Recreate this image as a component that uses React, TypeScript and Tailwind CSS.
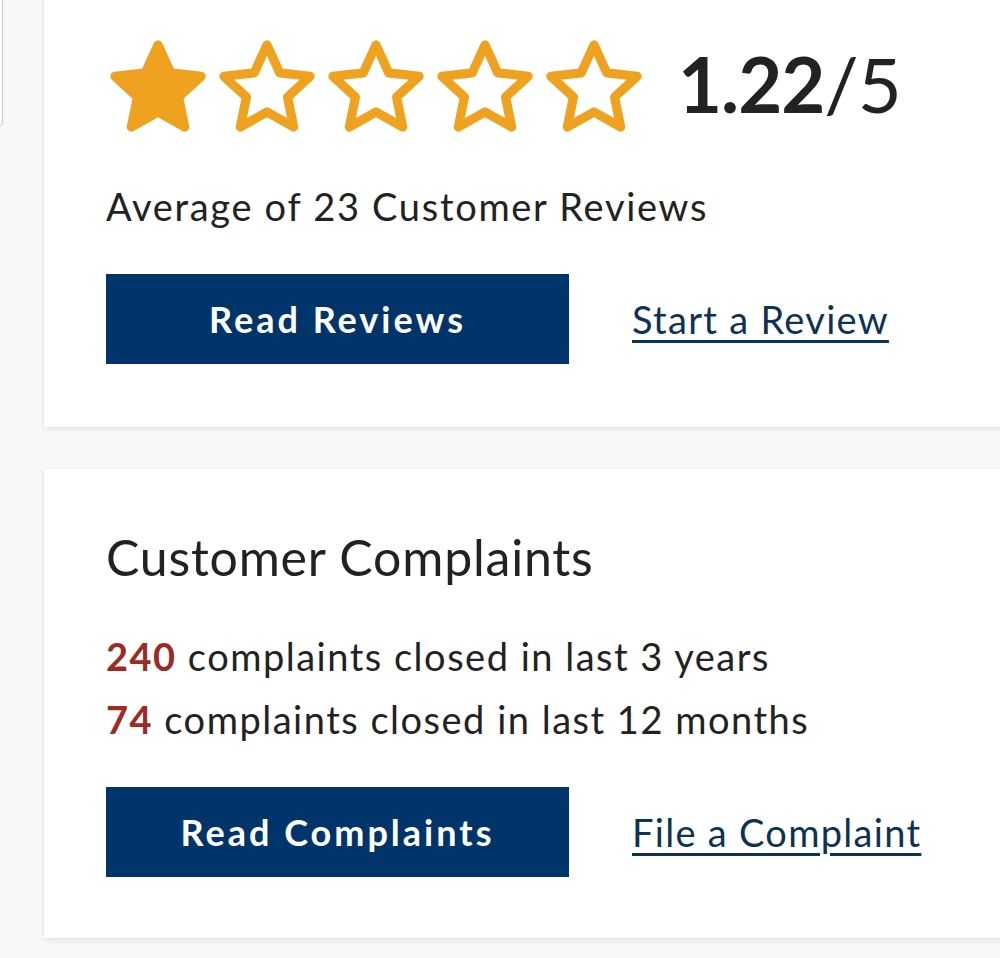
import React from 'react';

const starPoints =
  '50,12 61.8,37.8 89.9,41 69,60.2 74.7,88 50,74 25.3,88 31,60.2 10.1,41 38.2,37.8';

function Star({ filled }: { filled: boolean }) {
  return (
    <svg viewBox="0 0 100 100" className="w-[108px] h-[108px] shrink-0">
      <polygon
        points={starPoints}
        fill={filled ? '#efa21f' : 'none'}
        stroke="#efa21f"
        strokeWidth={8.5}
        strokeLinejoin="round"
      />
    </svg>
  );
}

export default function App() {
  const rating = 1;
  return (
    <div className="relative h-[958px] overflow-hidden bg-[#f8f8f8] font-['Lato',sans-serif] text-[#222]">
      {/* sliver of an overlay at the left edge */}
      <div className="absolute left-[-20px] top-[-10px] w-[23px] h-[138px] rounded-br-[6px] border border-[#c8c8c8] bg-white" />

      <div className="pl-[44px]">
        {/* Reviews card */}
        <section className="-mt-[20px] w-[1000px] bg-white pl-[56px] pt-[52px] pb-[63px] shadow-[0_3px_5px_rgba(0,0,0,0.07),-1px_0_3px_rgba(0,0,0,0.04)]">
          <div className="ml-[4px] flex items-center">
            <div className="flex gap-[1px]">
              {[0, 1, 2, 3, 4].map((i) => (
                <Star key={i} filled={i < rating} />
              ))}
            </div>
            <p className="ml-[30px] -mt-[4px] text-[76px] leading-none tracking-[-1px] text-[#222]">
              <span className="font-bold">1.22</span>/5
            </p>
          </div>

          <p className="ml-[6px] mt-[42px] text-[38px] leading-[48px] tracking-[1.7px]">Average of 23 Customer Reviews</p>

          <div className="ml-[6px] mt-[44px] flex items-center">
            <button className="w-[463px] h-[90px] bg-[#00346a] text-white text-[36px] tracking-[3px] font-bold flex items-center justify-center">
              Read Reviews
            </button>
            <a href="#" className="ml-[63px] text-[38px] tracking-[1.3px] text-[#0c3256] underline decoration-[3px] underline-offset-[6px]">
              Start a Review
            </a>
          </div>
        </section>

        {/* Complaints card */}
        <section className="mt-[42px] w-[1000px] bg-white pl-[62px] pt-[60px] pb-[61px] shadow-[0_3px_5px_rgba(0,0,0,0.07),-1px_0_3px_rgba(0,0,0,0.04)]">
          <h2 className="text-[50px] leading-[56px] tracking-[0.8px] font-normal">Customer Complaints</h2>

          <div className="mt-[40px] text-[38px] leading-[63px] tracking-[1.5px]">
            <p>
              <span className="font-bold text-[#9c2b23]">240</span> complaints closed in last 3 years
            </p>
            <p>
              <span className="font-bold text-[#9c2b23]">74</span> complaints closed in last 12 months
            </p>
          </div>

          <div className="mt-[36px] flex items-center">
            <button className="w-[463px] h-[90px] bg-[#00346a] text-white text-[36px] tracking-[3px] font-bold flex items-center justify-center">
              Read Complaints
            </button>
            <a href="#" className="ml-[63px] text-[38px] tracking-[1.3px] text-[#0c3256] underline decoration-[3px] underline-offset-[6px]">
              File a Complaint
            </a>
          </div>
        </section>
      </div>
    </div>
  );
}
